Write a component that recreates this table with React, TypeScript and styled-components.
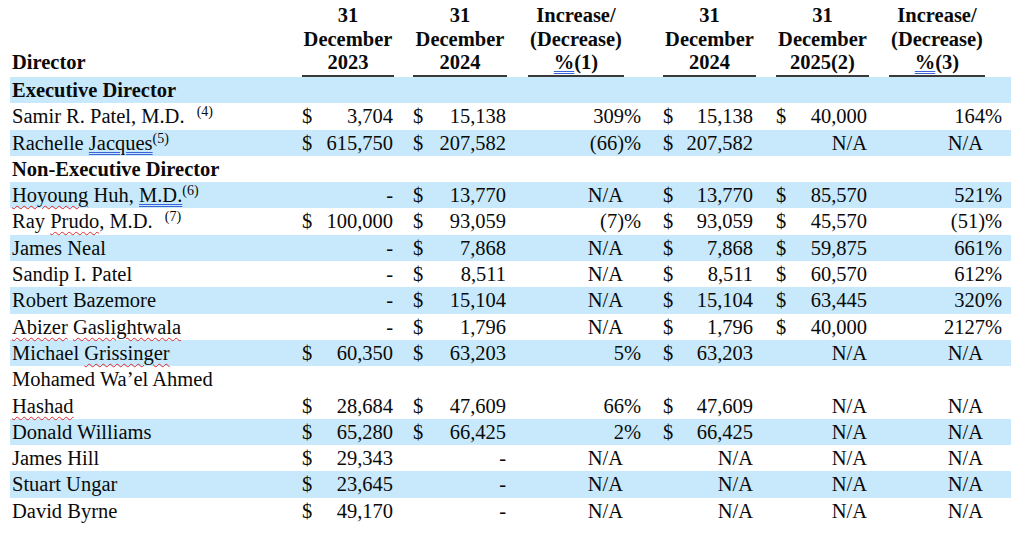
import React from 'react';
import styled, { createGlobalStyle } from 'styled-components';

const GlobalStyle = createGlobalStyle`
  html, body { margin: 0; padding: 0; background: #ffffff; }
  body { font-family: "Liberation Serif", "Times New Roman", serif; color: #0a0a0a; }
`;

const COLS = '292px 92px 19px 94px 21px 96px 20px 19px 93px 20px 93px 20px 96px 20px 6px';

const Sheet = styled.div`
  width: 1001px;
  margin-left: 10px;
  font-size: 20.5px;
`;

const Row = styled.div<{ $shade?: boolean }>`
  display: grid;
  grid-template-columns: ${COLS};
  align-items: end;
  line-height: 26.3px;
  background: ${(p) => (p.$shade ? '#c7e9fb' : 'transparent')};
`;

const HeadRow = styled.div`
  display: grid;
  grid-template-columns: ${COLS};
  align-items: end;
  line-height: 23.5px;
  padding-top: 4px;
  font-weight: bold;
  margin-bottom: 0.5px;
`;

const HeadCell = styled.div<{ $col: number }>`
  grid-column: ${(p) => p.$col};
  text-align: center;
  white-space: nowrap;
  border-bottom: 2px solid #3a3a3a;
`;

const HeadLabel = styled.div`
  grid-column: 1;
  padding-left: 2px;
  padding-bottom: 2px;
`;

const Name = styled.div<{ $bold?: boolean }>`
  grid-column: 1;
  padding-left: 2px;
  white-space: nowrap;
  font-weight: ${(p) => (p.$bold ? 'bold' : 'normal')};
`;

const Cell = styled.div<{ $col: number; $pad?: number }>`
  grid-column: ${(p) => p.$col};
  padding-right: ${(p) => p.$pad ?? 0}px;
  text-align: right;
  white-space: nowrap;
`;

const Money = styled(Cell)`
  display: flex;
  justify-content: space-between;
`;

const PctSign = styled.div<{ $col: number }>`
  grid-column: ${(p) => p.$col};
  text-align: left;
`;

const Sup = styled.span<{ $gap?: boolean }>`
  position: relative;
  top: -7px;
  font-size: 14px;
  line-height: 0;
  margin-left: ${(p) => (p.$gap ? '7px' : '0')};
`;

const Squiggle = styled.span`
  text-decoration-line: underline;
  text-decoration-style: wavy;
  text-decoration-color: #e0262a;
  text-decoration-thickness: 1px;
  text-underline-offset: 3px;
`;

const Grammar = styled.span`
  text-decoration-line: underline;
  text-decoration-style: double;
  text-decoration-color: #3c62d8;
  text-decoration-thickness: 1px;
  text-underline-offset: 2px;
`;

type Person = {
  name: React.ReactNode;
  vals: [string, string, string, string, string, string];
};
type Section = { section: string };
type RowData = Person | Section;

const rows: RowData[] = [
  { section: 'Executive Director' },
  {
    name: (
      <>
        Samir R. Patel, M.D. <Sup $gap>(4)</Sup>
      </>
    ),
    vals: ['3,704', '15,138', '309', '15,138', '40,000', '164'],
  },
  {
    name: (
      <>
        Rachelle <Grammar>Jacques</Grammar>
        <Sup>(5)</Sup>
      </>
    ),
    vals: ['615,750', '207,582', '(66)', '207,582', 'N/A', 'N/A'],
  },
  { section: 'Non-Executive Director' },
  {
    name: (
      <>
        <Squiggle>Hoyoung</Squiggle> Huh, <Grammar>M.D.</Grammar>
        <Sup>(6)</Sup>
      </>
    ),
    vals: ['-', '13,770', 'N/A', '13,770', '85,570', '521'],
  },
  {
    name: (
      <>
        Ray <Squiggle>Prudo</Squiggle>, M.D. <Sup $gap>(7)</Sup>
      </>
    ),
    vals: ['100,000', '93,059', '(7)', '93,059', '45,570', '(51)'],
  },
  { name: 'James Neal', vals: ['-', '7,868', 'N/A', '7,868', '59,875', '661'] },
  { name: 'Sandip I. Patel', vals: ['-', '8,511', 'N/A', '8,511', '60,570', '612'] },
  { name: 'Robert Bazemore', vals: ['-', '15,104', 'N/A', '15,104', '63,445', '320'] },
  {
    name: (
      <>
        <Squiggle>Abizer</Squiggle> <Squiggle>Gaslightwala</Squiggle>
      </>
    ),
    vals: ['-', '1,796', 'N/A', '1,796', '40,000', '2127'],
  },
  {
    name: (
      <>
        Michael <Squiggle>Grissinger</Squiggle>
      </>
    ),
    vals: ['60,350', '63,203', '5', '63,203', 'N/A', 'N/A'],
  },
  {
    name: (
      <>
        Mohamed Wa’el Ahmed
        <br />
        <Squiggle>Hashad</Squiggle>
      </>
    ),
    vals: ['28,684', '47,609', '66', '47,609', 'N/A', 'N/A'],
  },
  { name: 'Donald Williams', vals: ['65,280', '66,425', '2', '66,425', 'N/A', 'N/A'] },
  { name: 'James Hill', vals: ['29,343', '-', 'N/A', 'N/A', 'N/A', 'N/A'] },
  { name: 'Stuart Ungar', vals: ['23,645', '-', 'N/A', 'N/A', 'N/A', 'N/A'] },
  { name: 'David Byrne', vals: ['49,170', '-', 'N/A', 'N/A', 'N/A', 'N/A'] },
];

const moneyCol = (v: string, col: number, pad: number) => {
  if (v === '-' || v === 'N/A') {
    return (
      <Cell $col={col} $pad={pad}>
        {v}
      </Cell>
    );
  }
  return (
    <Money $col={col} $pad={pad}>
      <span>$</span>
      <span>{v}</span>
    </Money>
  );
};

const pctCol = (v: string, col: number, naPad: number) => {
  if (v === 'N/A') {
    return (
      <Cell $col={col} $pad={naPad}>
        N/A
      </Cell>
    );
  }
  return (
    <>
      <Cell $col={col}>{v}</Cell>
      <PctSign $col={col + 1}>%</PctSign>
    </>
  );
};

const Header = () => (
  <HeadRow>
    <HeadLabel>Director</HeadLabel>
    <HeadCell $col={2}>
      31
      <br />
      December
      <br />
      2023
    </HeadCell>
    <HeadCell $col={4}>
      31
      <br />
      December
      <br />
      2024
    </HeadCell>
    <HeadCell $col={6}>
      Increase/
      <br />
      (Decrease)
      <br />
      <Grammar>%</Grammar>(1)
    </HeadCell>
    <HeadCell $col={9}>
      31
      <br />
      December
      <br />
      2024
    </HeadCell>
    <HeadCell $col={11}>
      31
      <br />
      December
      <br />
      2025(2)
    </HeadCell>
    <HeadCell $col={13}>
      Increase/
      <br />
      (Decrease)
      <br />
      <Grammar>%</Grammar>(3)
    </HeadCell>
  </HeadRow>
);

export default function App() {
  return (
    <>
      <GlobalStyle />
      <Sheet>
        <Header />
        {rows.map((r, i) => {
          const shade = i % 2 === 0;
          if ('section' in r) {
            return (
              <Row key={i} $shade={shade}>
                <Name $bold>{r.section}</Name>
              </Row>
            );
          }
          const [a, b, c, d, e, f] = r.vals;
          return (
            <Row key={i} $shade={shade}>
              <Name>{r.name}</Name>
              {moneyCol(a, 2, 1)}
              {moneyCol(b, 4, 1)}
              {pctCol(c, 6, 1)}
              {moneyCol(d, 9, 3)}
              {moneyCol(e, 11, 2)}
              {pctCol(f, 13, 2)}
            </Row>
          );
        })}
      </Sheet>
    </>
  );
}
